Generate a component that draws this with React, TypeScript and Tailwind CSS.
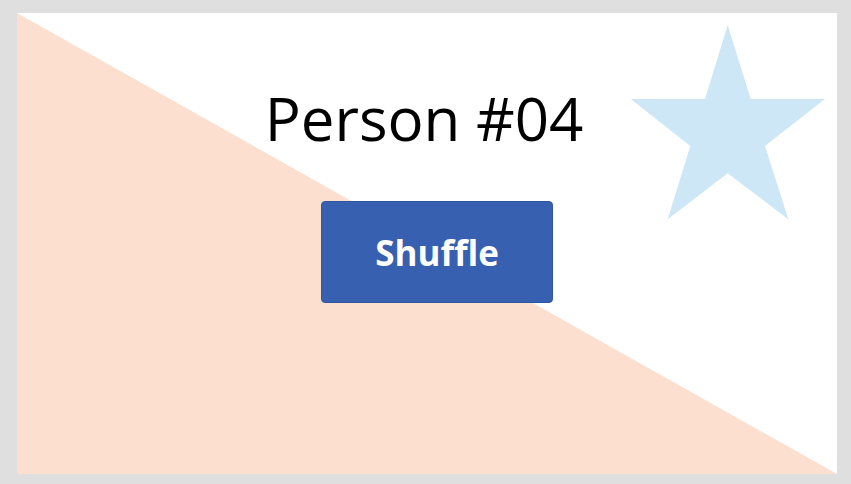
export default function App() {
  return (
    <div className="w-[851px] h-[484px] bg-[#dfdfdf] pl-[17px] pt-[13px]">
      <div className="relative w-[820px] h-[461px] bg-white overflow-hidden font-['Open_Sans',sans-serif]">
        <svg className="absolute inset-0" width="820" height="461" viewBox="0 0 820 461">
          <polygon points="0,0 820,461 0,461" fill="#fddfd0" />
          <polygon
            points="710.7,12 733.7,86 808,86 748,133 771.3,206.3 710.7,160.3 650.7,206.3 673.3,133 613.7,86 688,86"
            fill="#cde7f6"
          />
        </svg>
        <div className="relative flex flex-col items-center pt-[65px]">
          <h1 className="mr-[6px] text-[60px] leading-[80px] text-black">Person #04</h1>
          <button className="mt-[43px] ml-[20px] w-[232px] h-[102px] pt-[2px] rounded-[4px] border border-[#2f579f] bg-[#3760b1] text-white text-[35px] font-bold">
            Shuffle
          </button>
        </div>
      </div>
    </div>
  );
}
